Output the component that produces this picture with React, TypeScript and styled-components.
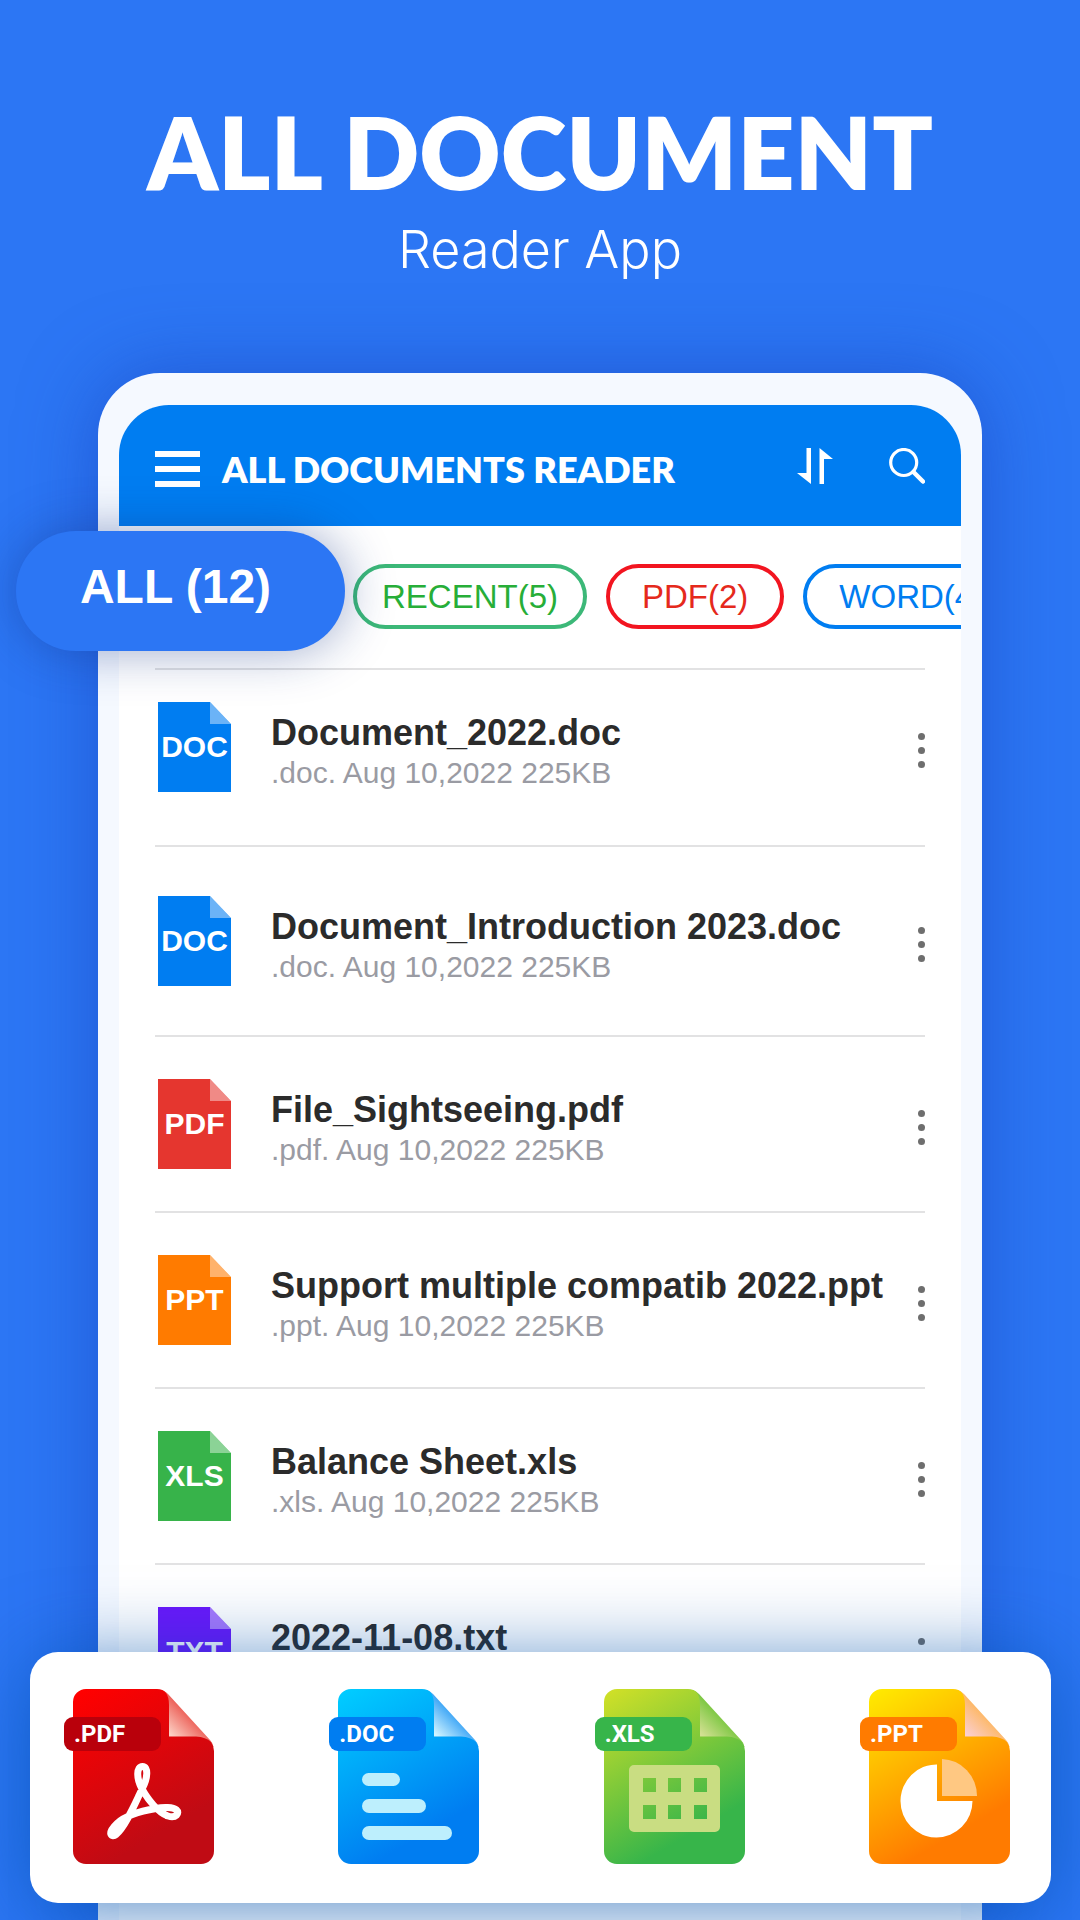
import React from 'react';
import styled, { createGlobalStyle } from 'styled-components';

const color = {
  page: '#2c76f4',
  bar: '#007df1',
  frame: '#f5f9ff',
  title: '#2b2b2b',
  meta: '#9a9ba3',
  line: '#e2e2e3',
  dots: '#6e6e6e',
};

const GlobalStyle = createGlobalStyle`
  *, *::before, *::after { box-sizing: border-box; }
  body {
    margin: 0;
    background: ${color.page};
    font-family: "Liberation Sans", Arial, sans-serif;
  }
  button { border: 0; padding: 0; background: none; font: inherit; cursor: pointer; }
  svg { display: block; }
`;

const Page = styled.div`
  display: flex;
  flex-direction: column;
  height: 100vh;
  overflow: hidden;
`;

const Hero = styled.header`
  flex: none;
  padding: 101px 24px 93px;
  color: #fff;
  text-align: center;
`;

const HeroTitle = styled.h1`
  margin: 0 0 19px;
  font-family: Lato, sans-serif;
  font-weight: 800;
  font-size: 100px;
  line-height: 100px;
`;

const HeroSubtitle = styled.p`
  margin: 0;
  font-family: Inter, sans-serif;
  font-weight: 300;
  font-size: 52px;
  line-height: 60px;
`;

const Phone = styled.main`
  flex: 1;
  margin: 0 98px;
  padding: 32px 21px 0;
  border-radius: 62px 62px 0 0;
  background: ${color.frame};
  box-shadow: 0 0 76px rgba(20, 60, 180, 0.5);
`;

const Screen = styled.div`
  min-height: 100%;
  border-radius: 50px 50px 0 0;
  background: #fff;
`;

const AppBar = styled.div`
  display: flex;
  align-items: center;
  justify-content: space-between;
  height: 121px;
  padding: 0 36px;
  border-radius: 50px 50px 0 0;
  background: ${color.bar};
  color: #fff;
`;

const BarGroup = styled.div<{ $gap: number }>`
  display: flex;
  align-items: center;
  gap: ${(p) => p.$gap}px;
`;

const BarHeading = styled(BarGroup)`
  padding-top: 6px;
`;

const BarTitle = styled.h2`
  margin: 0;
  font-family: Lato, sans-serif;
  font-weight: 800;
  font-size: 36px;
  line-height: 44px;
`;

const IconButton = styled.button`
  color: inherit;
`;

const Filters = styled.nav`
  position: relative;
`;

const FilterScroll = styled.div`
  display: flex;
  gap: 19px;
  padding: 38px 0 39px 234px;
  overflow: hidden;
`;

const Chip = styled.button<{ $line: string; $text: string; $pad: number }>`
  flex: none;
  height: 65px;
  padding: 0 ${(p) => p.$pad}px;
  border: 4px solid ${(p) => p.$line};
  border-radius: 33px;
  color: ${(p) => p.$text};
  font-size: 33px;
  line-height: 57px;
`;

const ActiveChip = styled.button`
  position: absolute;
  top: 5px;
  left: -103px;
  width: 329px;
  height: 120px;
  padding: 0 10px 10px 0;
  border-radius: 60px;
  background: ${color.page};
  box-shadow: 0 0 50px rgba(20, 50, 130, 0.42);
  color: #fff;
  font-weight: 700;
  font-size: 48px;
`;

const FileList = styled.ul`
  margin: 0;
  padding: 0 36px;
  list-style: none;
`;

const FileRow = styled.li<{ $top: number; $bottom: number }>`
  display: flex;
  align-items: flex-start;
  padding: ${(p) => p.$top}px 0 ${(p) => p.$bottom}px 3px;
  border-top: 2px solid ${color.line};
`;

const FileBadge = styled.div<{ $fill: string }>`
  position: relative;
  flex: none;
  width: 73px;
  height: 90px;
  padding-top: 30px;
  background: ${(p) => p.$fill};
  clip-path: polygon(0 0, calc(100% - 21px) 0, 100% 22px, 100% 100%, 0 100%);
  color: #fff;
  font-weight: 700;
  font-size: 30px;
  line-height: 30px;
  text-align: center;

  &::after {
    content: '';
    position: absolute;
    top: 0;
    right: 0;
    width: 21px;
    height: 22px;
    background: rgba(255, 255, 255, 0.42);
  }
`;

const FileText = styled.div`
  flex: 1;
  min-width: 0;
  padding: 10px 0 0 40px;
  white-space: nowrap;
`;

const FileName = styled.h3`
  margin: 0;
  color: ${color.title};
  font-size: 36px;
  line-height: 42px;
`;

const FileMeta = styled.p`
  margin: 0;
  color: ${color.meta};
  font-size: 30px;
  line-height: 38px;
`;

const MenuButton = styled.button`
  display: flex;
  align-items: center;
  justify-content: flex-end;
  width: 24px;
  height: 90px;
  padding-top: 6px;
`;

const Sheet = styled.section`
  position: fixed;
  right: 29px;
  bottom: 17px;
  left: 30px;
  display: flex;
  justify-content: space-between;
  padding: 37px 41px 38px 34px;
  border-radius: 28px;
  background: #fff;
  box-shadow: 0 8px 80px rgba(0, 80, 170, 0.66);
`;

const FormatButton = styled.button`
  position: relative;
`;

const FormatTag = styled.span<{ $fill: string }>`
  position: absolute;
  top: 28px;
  left: 0;
  width: 97px;
  height: 34px;
  padding-left: 10px;
  border-radius: 9px;
  background: ${(p) => p.$fill};
  color: #fff;
  font-family: Roboto, sans-serif;
  font-weight: 700;
  font-size: 24px;
  line-height: 34px;
  text-align: left;
`;

type Format = {
  id: string;
  from: string;
  to: string;
  tag: string;
  foldFrom: string;
  foldTo: string;
  art: React.ReactNode;
};

const formats: Format[] = [
  {
    id: 'PDF',
    from: '#ff0000',
    to: '#c00b14',
    tag: '#b9000b',
    foldFrom: '#fcd0c4',
    foldTo: '#ec6058',
    art: (
      <path
        d="M78 100C84 89 84.500 77.500 78.500 77.500C72.500 77.500 72 89 78 100C83 109 94 124 104 127C112 129.500 116 124 112.500 121C109 118 99 118 92 119.500C80 121.500 62 126 53 134.500C42 145 48 149 52 145.500C61 138 70 117 78 100Z"
        fill="none"
        stroke="#fff"
        strokeWidth="7"
        strokeLinejoin="round"
      />
    ),
  },
  {
    id: 'DOC',
    from: '#00cbff',
    to: '#007df1',
    tag: '#007df1',
    foldFrom: '#d2f4ff',
    foldTo: '#3ea6f6',
    art: (
      <g fill="#bdeffd">
        <rect x="33" y="84" width="38" height="13" rx="6.500" />
        <rect x="33" y="110" width="64" height="14" rx="7" />
        <rect x="33" y="137" width="90" height="14" rx="7" />
      </g>
    ),
  },
  {
    id: 'XLS',
    from: '#cddf28',
    to: '#37b54a',
    tag: '#37b54a',
    foldFrom: '#d3e092',
    foldTo: '#7cc742',
    art: (
      <path
        fill="#c9dd82"
        fillRule="evenodd"
        d="M39 76H120a5 5 0 0 1 5 5V138a5 5 0 0 1-5 5H39a5 5 0 0 1-5-5V81a5 5 0 0 1 5-5ZM48 89V103H61V89ZM73 89V103H86V89ZM99 89V103H112V89ZM48 116V130H61V116ZM73 116V130H86V116ZM99 116V130H112V116Z"
      />
    ),
  },
  {
    id: 'PPT',
    from: '#ffe800',
    to: '#ff7b00',
    tag: '#ff7b00',
    foldFrom: '#fbcfd0',
    foldTo: '#fdb866',
    art: (
      <>
        <path fill="#fff" d="M77 112V75.500A36 36.500 0 1 0 112.500 112Z" />
        <path fill="#ffc882" d="M82 107V70A36 37 0 0 1 117 107Z" />
      </>
    ),
  },
];

type FileItem = {
  kind: string;
  fill: string;
  name: string;
  meta: string;
  top: number;
  bottom: number;
};

const files: FileItem[] = [
  { kind: 'DOC', fill: color.bar, name: 'Document_2022.doc', meta: '.doc. Aug 10,2022 225KB', top: 32, bottom: 53 },
  { kind: 'DOC', fill: color.bar, name: 'Document_Introduction 2023.doc', meta: '.doc. Aug 10,2022 225KB', top: 49, bottom: 49 },
  { kind: 'PDF', fill: '#e5362f', name: 'File_Sightseeing.pdf', meta: '.pdf. Aug 10,2022 225KB', top: 42, bottom: 42 },
  { kind: 'PPT', fill: '#ff7b00', name: 'Support multiple compatib 2022.ppt', meta: '.ppt. Aug 10,2022 225KB', top: 42, bottom: 42 },
  { kind: 'XLS', fill: '#37b34a', name: 'Balance Sheet.xls', meta: '.xls. Aug 10,2022 225KB', top: 42, bottom: 42 },
  { kind: 'TXT', fill: '#6a17fb', name: '2022-11-08.txt', meta: '.txt. Aug 10,2022 225KB', top: 42, bottom: 42 },
];

const chips = [
  { label: 'RECENT(5)', line: '#3cb878', text: '#27ae38', pad: 25 },
  { label: 'PDF(2)', line: '#f21520', text: '#e5291c', pad: 32 },
  { label: 'WORD(4)', line: '#007df1', text: '#007df1', pad: 32 },
];

const HamburgerIcon = () => (
  <svg width="45" height="36" viewBox="0 0 45 36" fill="currentColor" aria-hidden="true">
    <path d="M0 0H45V6H0ZM0 15H45V21H0ZM0 30H45V36H0Z" />
  </svg>
);

const SortIcon = () => (
  <svg width="36" height="36" viewBox="0 0 36 36" fill="currentColor" aria-hidden="true">
    <path d="M9.500 0H14V36L0 25H9.500ZM22.500 0L36 11H27V36H22.500Z" />
  </svg>
);

const SearchIcon = () => (
  <svg width="36" height="36" viewBox="0 0 36 36" fill="none" stroke="currentColor" aria-hidden="true">
    <circle cx="14.700" cy="14.500" r="13" strokeWidth="3.200" />
    <path d="M24.500 24L34 33.500" strokeWidth="4.500" strokeLinecap="round" />
  </svg>
);

const MoreIcon = () => (
  <svg width="7" height="35" viewBox="0 0 7 35" fill={color.dots} aria-hidden="true">
    <circle cx="3.500" cy="3.500" r="3.500" />
    <circle cx="3.500" cy="17.500" r="3.500" />
    <circle cx="3.500" cy="31.500" r="3.500" />
  </svg>
);

const FormatIcon = ({ format }: { format: Format }) => (
  <svg width="150" height="176" viewBox="0 0 150 176" aria-hidden="true">
    <defs>
      <linearGradient id={`body-${format.id}`} gradientUnits="userSpaceOnUse" x1="22" y1="0" x2="104" y2="140">
        <stop offset="0" stopColor={format.from} />
        <stop offset="1" stopColor={format.to} />
      </linearGradient>
      <linearGradient id={`fold-${format.id}`} gradientUnits="userSpaceOnUse" x1="108" y1="47" x2="127" y2="28">
        <stop offset="0" stopColor={format.foldFrom} />
        <stop offset="1" stopColor={format.foldTo} />
      </linearGradient>
    </defs>
    <path
      fill={`url(#fold-${format.id})`}
      d="M98 1Q101 2 104 5L146 51Q149 54 149.500 58L132 56L104 48Z"
    />
    <path
      fill={`url(#body-${format.id})`}
      d="M22 0H93Q99 0 102 4Q105 8 105 16V47.500H132Q142 48 147 53Q150 57 150 62V162a13 13 0 0 1-13 13H22a13 13 0 0 1-13-13V13a13 13 0 0 1 13-13Z"
    />
    {format.art}
  </svg>
);

export default function App() {
  return (
    <>
      <GlobalStyle />
      <Page>
        <Hero>
          <HeroTitle>ALL DOCUMENT</HeroTitle>
          <HeroSubtitle>Reader App</HeroSubtitle>
        </Hero>
        <Phone>
          <Screen>
            <AppBar>
              <BarHeading $gap={22}>
                <IconButton aria-label="Open menu">
                  <HamburgerIcon />
                </IconButton>
                <BarTitle>ALL DOCUMENTS READER</BarTitle>
              </BarHeading>
              <BarGroup $gap={56}>
                <IconButton aria-label="Sort">
                  <SortIcon />
                </IconButton>
                <IconButton aria-label="Search">
                  <SearchIcon />
                </IconButton>
              </BarGroup>
            </AppBar>
            <Filters aria-label="File types">
              <FilterScroll>
                {chips.map((chip) => (
                  <Chip key={chip.label} $line={chip.line} $text={chip.text} $pad={chip.pad}>
                    {chip.label}
                  </Chip>
                ))}
              </FilterScroll>
              <ActiveChip aria-pressed="true">ALL (12)</ActiveChip>
            </Filters>
            <FileList>
              {files.map((file) => (
                <FileRow key={file.name} $top={file.top} $bottom={file.bottom}>
                  <FileBadge $fill={file.fill}>{file.kind}</FileBadge>
                  <FileText>
                    <FileName>{file.name}</FileName>
                    <FileMeta>{file.meta}</FileMeta>
                  </FileText>
                  <MenuButton aria-label={`More actions for ${file.name}`}>
                    <MoreIcon />
                  </MenuButton>
                </FileRow>
              ))}
            </FileList>
          </Screen>
        </Phone>
        <Sheet aria-label="Supported formats">
          {formats.map((format) => (
            <FormatButton key={format.id}>
              <FormatIcon format={format} />
              <FormatTag $fill={format.tag}>.{format.id}</FormatTag>
            </FormatButton>
          ))}
        </Sheet>
      </Page>
    </>
  );
}
